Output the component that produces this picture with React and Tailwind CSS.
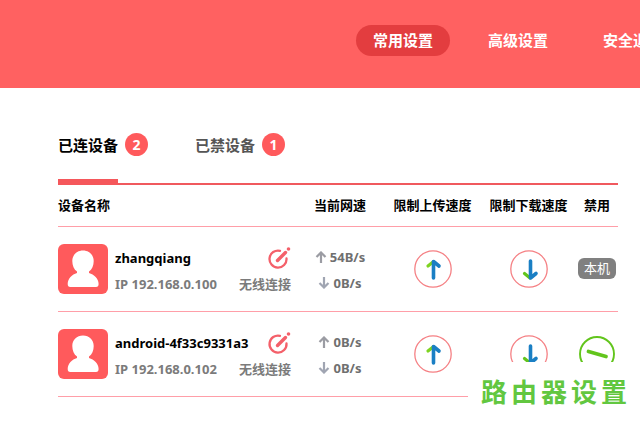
import { useState } from "react";

const navItems = ["常用设置", "高级设置", "安全退出"];

const tabs = [
  { id: "connected", label: "已连设备", count: 2 },
  { id: "blocked", label: "已禁设备", count: 1 },
];

const devices = [
  { name: "zhangqiang", ip: "192.168.0.100", link: "无线连接", up: "54B/s", down: "0B/s", self: true },
  { name: "android-4f33c9331a3", ip: "192.168.0.102", link: "无线连接", up: "0B/s", down: "0B/s", self: false },
];

const Avatar = () => (
  <svg className="size-[50px] shrink-0" viewBox="0 0 50 50" aria-hidden="true">
    <rect width="50" height="50" rx="6" fill="#ff5a5c" />
    <path
      d="M25 6.5c-6.2 0-10.7 4.5-10.7 10.5 0 4.500 1.700 8.500 4.700 10.500v1.500c-5 1.500-9.300 5.500-9.300 11 0 2 .8 3 2.600 3h25.700c1.800 0 2.600-1 2.600-3 0-5.500-4.600-9.500-9.600-11v-1.500c3-2 4.700-6 4.700-10.500C35.700 11 31.200 6.500 25 6.500z"
      fill="#fff"
    />
  </svg>
);

const EditIcon = () => (
  <svg className="size-6" viewBox="0 0 24 24" fill="none" stroke="#f4606a" strokeLinecap="round" aria-hidden="true">
    <path d="M13 4.800A8.500 8.500 0 1 0 19.500 12.500" strokeWidth="2.300" />
    <path d="M10.500 14.500L18.500 6.500" strokeWidth="3.400" />
    <path d="M21.500 3h.01" strokeWidth="3.600" />
  </svg>
);

const SmallArrow = ({ down }) => (
  <svg className="size-3" viewBox="0 0 12 12" fill="none" stroke={down ? "#a0a5b2" : "#9b9ca3"} strokeWidth="2.200" aria-hidden="true">
    {down ? <path d="M6 0v10.500M1.500 6L6 10.500 10.500 6" /> : <path d="M6 12V1.500M1.500 6L6 1.500 10.500 6" />}
  </svg>
);

const LimitButton = ({ down, label }) => (
  <button type="button" aria-label={label} className="mx-auto block size-[38px]">
    <svg viewBox="0 0 38 38" fill="none" strokeLinecap="round" strokeLinejoin="round">
      <circle cx="19" cy="19" r="18.200" stroke="#f58084" strokeWidth="1.300" />
      {down ? (
        <>
          <path d="M14.500 23.500l5.500 4.500" stroke="#62c51c" strokeWidth="3.200" />
          <path d="M20.500 11v17l5.500-4.500" stroke="#1a7fc4" strokeWidth="3.600" />
        </>
      ) : (
        <>
          <path d="M14 16l5-4" stroke="#7ed321" strokeWidth="3.200" />
          <path d="M19.500 28V11.500l5.500 4.500" stroke="#1a7fc4" strokeWidth="3.600" />
        </>
      )}
    </svg>
  </button>
);

const BlockButton = () => (
  <button type="button" aria-label="禁用" className="mx-auto block size-9">
    <svg viewBox="0 0 36 36" fill="none" stroke="#62c51c" strokeLinecap="round">
      <circle cx="18" cy="18" r="17" strokeWidth="1.900" />
      <path d="M9.500 15.500l17.500 5" strokeWidth="3.800" />
    </svg>
  </button>
);

const DeviceRow = ({ device }) => (
  <tr className="h-[85px] border-b border-[#ff9ea8]">
    <td>
      <div className="flex items-center gap-[7px] pr-[9px]">
        <Avatar />
        <div className="flex-1 pt-0.5">
          <div className="flex h-7 items-center justify-between">
            <span className="text-black">{device.name}</span>
            <button type="button" aria-label="编辑">
              <EditIcon />
            </button>
          </div>
          <div className="flex h-6 items-center justify-between text-[#7b7b7b]">
            <span>IP {device.ip}</span>
            <span>{device.link}</span>
          </div>
        </div>
      </div>
    </td>
    <td className="text-[#6f6f6f]">
      <div className="flex h-7 items-center justify-center gap-[3px]">
        <SmallArrow />
        {device.up}
      </div>
      <div className="flex h-6 items-center justify-center gap-[3px]">
        <SmallArrow down />
        {device.down}
      </div>
    </td>
    <td>
      <LimitButton label="限制上传速度" />
    </td>
    <td>
      <LimitButton down label="限制下载速度" />
    </td>
    <td className="pl-1 text-center">
      {device.self ? (
        <span className="inline-block rounded-md bg-[#808080] px-[6px] text-[13px] leading-[21px] font-normal text-white">
          本机
        </span>
      ) : (
        <BlockButton />
      )}
    </td>
  </tr>
);

const App = () => {
  const [active, setActive] = useState("connected");

  return (
    <div className="relative min-h-screen overflow-hidden bg-white font-['Noto_Sans','Noto_Sans_CJK_SC',sans-serif] font-bold">
      <header className="bg-[#ff6161] pt-[25px] pb-8">
        <nav className="ml-[356px] flex gap-[21px] text-[15px] leading-[31px] text-white">
          {navItems.map((item, i) => (
            <a
              key={item}
              href="#"
              className={`shrink-0 rounded-full px-[17px] whitespace-nowrap ${i === 0 ? "bg-[#e33d3f]" : ""}`}
            >
              {item}
            </a>
          ))}
        </nav>
      </header>

      <main className="pr-[22px] pl-[58px]">
        <div className="flex gap-[47px] border-b-2 border-[#f0595e] pt-[37px]">
          {tabs.map((tab) => (
            <button
              key={tab.id}
              type="button"
              onClick={() => setActive(tab.id)}
              className="flex items-start gap-[7px]"
            >
              <span
                className={`-mb-[2px] h-[60px] text-[15px] leading-10 ${
                  active === tab.id ? "border-b-[6px] border-[#f5575b] text-black" : "text-[#555]"
                }`}
              >
                {tab.label}
              </span>
              <span className="mt-2 size-[23px] rounded-full bg-[#ff5a5c] text-center text-[14px] leading-[23px] text-white">
                {tab.count}
              </span>
            </button>
          ))}
        </div>

        <table className="w-full table-fixed text-[13px] leading-5">
          <thead>
            <tr className="h-[41px] border-b border-[#ff9ea8] whitespace-nowrap text-black">
              <th className="text-left">设备名称</th>
              <th className="w-20">当前网速</th>
              <th className="w-[105px]">限制上传速度</th>
              <th className="w-[87px]">限制下载速度</th>
              <th className="w-[46px] pl-1">禁用</th>
            </tr>
          </thead>
          <tbody>
            {devices.map((device) => (
              <DeviceRow key={device.ip} device={device} />
            ))}
          </tbody>
        </table>
      </main>

      <div className="absolute right-0 bottom-0 flex h-[60px] w-[172px] items-center justify-center gap-1 bg-white text-[26px] text-[#62c740]">
        {[..."路由器设置"].map((char) => (
          <span key={char}>{char}</span>
        ))}
      </div>
    </div>
  );
};

export default App;
